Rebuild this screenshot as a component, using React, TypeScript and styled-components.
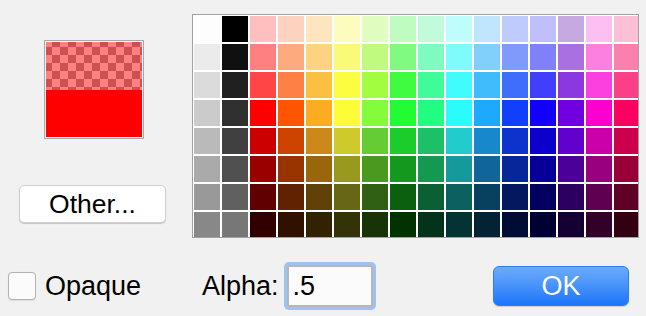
import React from "react";
import styled, { createGlobalStyle } from "styled-components";

const Global = createGlobalStyle`
  html, body { margin: 0; padding: 0; background: #f1f1f1; }
  body { font-family: "Liberation Sans", Arial, Helvetica, sans-serif; }
`;

const grays0 = ["#fdfdfd", "#ebebeb", "#dbdbdb", "#cbcbcb", "#bababa", "#aaaaaa", "#999999", "#888888"];
const grays1 = ["#000000", "#101010", "#202020", "#303030", "#404040", "#505050", "#606060", "#777777"];

const hueRows: string[][] = [
  ["#ffbfbf", "#fdd3bf", "#fde6bf", "#fcfcbf", "#e0fcbf", "#bffcbf", "#c0fcd9", "#bffcfc", "#bfe6fc", "#bfcbfc", "#bfbffc", "#c6a9e0", "#fcbff0", "#fbbfd6"],
  ["#ff8080", "#fdaa7f", "#fdd280", "#f9f97a", "#c0fb7f", "#80fb80", "#80fbbf", "#80fbfb", "#80d0fb", "#809afb", "#8080fb", "#a870e0", "#fb80e0", "#fb80ae"],
  ["#ff4545", "#ff8045", "#fcc040", "#fcfc40", "#a2fc40", "#40fc40", "#40fc98", "#40fcfc", "#40bcfc", "#406efc", "#4040fc", "#8c38e0", "#fc40e0", "#fc4088"],
  ["#ff0000", "#ff5500", "#fdab20", "#fdfc36", "#84fc3c", "#22fc33", "#22fc80", "#2afcfc", "#1eaafc", "#1040fc", "#1000fc", "#7000e0", "#fc00d0", "#fc0060"],
  ["#cc0000", "#cc4400", "#cc8818", "#cfca2c", "#66cc33", "#1ccc2c", "#1cc066", "#22cccc", "#1888cc", "#0c33cc", "#0c00cc", "#6200cc", "#cc00aa", "#cc004c"],
  ["#990000", "#993300", "#99660c", "#999920", "#4c9920", "#14991e", "#149950", "#169999", "#106699", "#062699", "#060099", "#4a0099", "#990080", "#990038"],
  ["#600000", "#602200", "#604208", "#666614", "#306014", "#0a600f", "#0a6033", "#0c6060", "#084060", "#041860", "#040060", "#2c0060", "#600050", "#600024"],
  ["#300000", "#301100", "#332200", "#333308", "#183308", "#003300", "#033318", "#033333", "#032233", "#000c33", "#000033", "#160033", "#330028", "#330012"],
];

const Page = styled.div`
  width: 646px;
  height: 316px;
  background: #f1f1f1;
  display: flex;
  flex-direction: column;
  box-sizing: border-box;
  padding-top: 14px;
  overflow: hidden;
`;

const Top = styled.div`
  display: flex;
  align-items: flex-start;
`;

const LeftColumn = styled.div`
  width: 192px;
  display: flex;
  flex-direction: column;
  align-items: flex-start;
  padding-top: 26px;
`;

const Swatch = styled.div`
  width: 96px;
  height: 95px;
  border: 1px solid #a9a9a9;
  padding: 1px;
  background: #f4f4f4;
  margin-left: 44px;
  display: flex;
  flex-direction: column;
`;

const Checker = styled.div`
  flex: 1;
  background-color: #ff8080;
  background-image:
    linear-gradient(45deg, #cb5050 25%, transparent 25%, transparent 75%, #cb5050 75%),
    linear-gradient(45deg, #cb5050 25%, transparent 25%, transparent 75%, #cb5050 75%);
  background-size: 16px 16px;
  background-position: -2px -3px, 6px 5px;
`;

const Solid = styled.div`
  flex: 1;
  background: #ff0000;
`;

const OtherButton = styled.button`
  margin-top: 46px;
  margin-left: 19px;
  width: 147px;
  height: 38px;
  background: #ffffff;
  border: 1px solid #cfcfcf;
  border-radius: 5px;
  box-shadow: 0 1px 1px rgba(0, 0, 0, 0.18);
  font-family: "Liberation Sans", Arial, Helvetica, sans-serif;
  font-size: 26.5px;
  color: #000;
  padding: 0;
  line-height: 36px;
`;

const Grid = styled.div`
  width: 447px;
  height: 224px;
  box-sizing: border-box;
  border: 1px solid #a2a2a2;
  background: #ffffff;
  padding: 1px 0 0 1px;
  display: grid;
  grid-template-columns: repeat(15, 26px) 25px;
  grid-template-rows: repeat(7, 26px) 25px;
  gap: 2px;
  overflow: hidden;
`;

const Cell = styled.div<{ $c: string }>`
  background: ${(p) => p.$c};
`;

const Bottom = styled.div`
  display: flex;
  align-items: center;
  height: 58px;
  margin-top: 19px;
`;

const CheckLabel = styled.label`
  display: flex;
  align-items: center;
  margin-left: 8px;
  font-size: 27px;
  color: #000;
  gap: 9px;
  width: 194px;
`;

const CheckBox = styled.span`
  width: 26px;
  height: 26px;
  border: 1px solid #b3b3b3;
  border-radius: 4px;
  background: #fbfbfb;
  display: inline-block;
  box-shadow: 0 0.5px 1px rgba(0, 0, 0, 0.08);
`;

const AlphaGroup = styled.div`
  display: flex;
  align-items: center;
  gap: 8px;
  width: 291px;
`;

const AlphaLabel = styled.span`
  font-size: 27px;
  color: #000;
`;

const AlphaInput = styled.div`
  width: 78px;
  height: 38px;
  border: 2px solid #b7b7b7;
  background: #fbfbfb;
  box-shadow: 0 0 0 3px #9dc3f2;
  border-radius: 2px;
  font-size: 27px;
  line-height: 38px;
  padding-left: 4px;
  box-sizing: content-box;
  color: #000;
`;

const OkButton = styled.button`
  width: 136px;
  height: 40px;
  border: 1px solid #2b7ef0;
  border-radius: 6px;
  background: linear-gradient(#6cabf9, #4b95fa 45%, #1b74fb);
  color: #fff;
  font-family: "Liberation Sans", Arial, Helvetica, sans-serif;
  font-size: 27px;
  padding: 0;
  box-shadow: 0 1px 1px rgba(0, 0, 0, 0.15);
`;

export default function App() {
  return (
    <>
      <Global />
      <Page>
        <Top>
          <LeftColumn>
            <Swatch>
              <Checker />
              <Solid />
            </Swatch>
            <OtherButton>Other...</OtherButton>
          </LeftColumn>
          <Grid>
            {hueRows.map((row, r) => (
              <React.Fragment key={r}>
                <Cell $c={grays0[r]} />
                <Cell $c={grays1[r]} />
                {row.map((c, i) => (
                  <Cell key={i} $c={c} />
                ))}
              </React.Fragment>
            ))}
          </Grid>
        </Top>
        <Bottom>
          <CheckLabel>
            <CheckBox />
            Opaque
          </CheckLabel>
          <AlphaGroup>
            <AlphaLabel>Alpha:</AlphaLabel>
            <AlphaInput>.5</AlphaInput>
          </AlphaGroup>
          <OkButton>OK</OkButton>
        </Bottom>
      </Page>
    </>
  );
}
